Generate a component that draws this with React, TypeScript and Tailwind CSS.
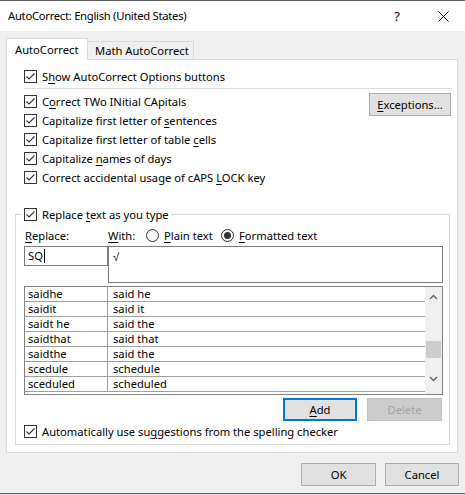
import React from "react";

function Check() {
  return (
    <span className="flex h-[13px] w-[13px] shrink-0 items-center justify-center border border-[#333333] bg-white">
      <svg width="11" height="11" viewBox="0 0 11 11">
        <polyline points="1.5,5.5 4,8 9.5,2.5" fill="none" stroke="#333333" strokeWidth="1.1" />
      </svg>
    </span>
  );
}

function Radio({ on }: { on?: boolean }) {
  return (
    <span className="flex h-[13px] w-[13px] shrink-0 items-center justify-center rounded-full border border-[#333333] bg-white">
      {on && <span className="h-[7px] w-[7px] rounded-full bg-[#333333]" />}
    </span>
  );
}

function CheckRow({ children }: { children: React.ReactNode }) {
  return (
    <div className="flex h-[19px] items-center gap-[5px]">
      <Check />
      <span className="whitespace-nowrap">{children}</span>
    </div>
  );
}

const rows: [string, string][] = [
  ["saidhe", "said he"],
  ["saidit", "said it"],
  ["saidt he", "said the"],
  ["saidthat", "said that"],
  ["saidthe", "said the"],
  ["scedule", "schedule"],
  ["sceduled", "scheduled"],
];

export default function App() {
  return (
    <div className="flex h-[495px] w-[465px] flex-col overflow-hidden bg-[#f0f0f0] font-['Noto_Sans',sans-serif] text-[11.2px] leading-none text-black">
      <div className="h-px bg-[#5b5b5b]" />
      <div className="flex h-[30px] items-center bg-white pl-[8px]">
        <span className="whitespace-nowrap text-[11.3px] tracking-[-0.3px]">AutoCorrect: English (United States)</span>
        <span className="ml-auto mr-[38px] text-[13px]">?</span>
        <svg width="11" height="11" viewBox="0 0 11 11" className="mr-[16px]">
          <path d="M0.5 0.5 L10.5 10.5 M10.5 0.5 L0.5 10.5" stroke="#000" strokeWidth="1" />
        </svg>
      </div>

      <div className="ml-[6px] mt-[7px] flex h-[21px] items-end">
        <div className="relative z-10 -mb-px flex h-[22px] w-[82px] items-center whitespace-nowrap border border-b-0 border-[#d9d9d9] bg-white pl-[8px]">
          AutoCorrect
        </div>
        <div className="flex h-[18px] w-[106px] items-center whitespace-nowrap border-r border-t border-[#d9d9d9] bg-[#f0f0f0] pl-[7px] pt-px">
          Math AutoCorrect
        </div>
      </div>

      <div className="ml-[6px] flex h-[394px] w-[452px] flex-col border border-[#d9d9d9] bg-white">
        <div className="ml-[17px] mt-[7px]">
          <CheckRow>
            S<u className="underline-offset-2">h</u>ow AutoCorrect Options buttons
          </CheckRow>
        </div>
        <div className="ml-[17px] mr-[5px] mt-[2px] h-px bg-[#dcdcdc]" />

        <div className="ml-[17px] mr-[6px] mt-[3px] flex">
          <div className="flex flex-col">
            <CheckRow>
              C<u className="underline-offset-2">o</u>rrect TWo INitial CApitals
            </CheckRow>
            <CheckRow>
              Capitalize first letter of <u className="underline-offset-2">s</u>entences
            </CheckRow>
            <CheckRow>
              Capitalize first letter of table <u className="underline-offset-2">c</u>ells
            </CheckRow>
            <CheckRow>
              Capitalize <u className="underline-offset-2">n</u>ames of days
            </CheckRow>
            <CheckRow>
              Correct accidental usage of cAPS <u className="underline-offset-2">L</u>OCK key
            </CheckRow>
          </div>
          <button className="ml-auto mt-px flex h-[23px] w-[82px] items-center justify-center border border-[#adadad] bg-[#e1e1e1]">
            <span>
              <u className="underline-offset-2">E</u>xceptions...
            </span>
          </button>
        </div>

        <fieldset className="ml-[8px] mt-[18px] w-[435px] border border-[#d9d9d9] pb-[3px] pl-[8px]">
          <legend className="-ml-[2px] flex h-[19px] items-center gap-[5px] px-[2px]">
            <Check />
            <span className="whitespace-nowrap">
              Replace <u className="underline-offset-2">t</u>ext as you type
            </span>
          </legend>

          <div className="mt-[2px] flex h-[19px] items-center whitespace-nowrap">
            <span className="w-[84px] pl-px">
              <u className="underline-offset-2">R</u>eplace:
            </span>
            <span className="w-[38px]">
              <u className="underline-offset-2">W</u>ith:
            </span>
            <span className="flex w-[75px] items-center gap-[5px]">
              <Radio />
              <span>
                <u className="underline-offset-2">P</u>lain text
              </span>
            </span>
            <span className="flex items-center gap-[5px]">
              <Radio on />
              <span>
                <u className="underline-offset-2">F</u>ormatted text
              </span>
            </span>
          </div>

          <div className="mt-px flex items-start">
            <div className="flex h-[20px] w-[84px] items-center border border-[#7a7a7a] pl-[3px]">
              SQ<span className="ml-px inline-block h-[14px] w-px bg-black" />
            </div>
            <div className="h-[37px] w-[335px] border border-[#7a7a7a] pl-[4px] pt-[4px]">√</div>
          </div>

          <div className="mt-[3px] flex h-[109px] w-[419px] border border-[#828282]">
            <div className="flex flex-1 flex-col">
              {rows.map(([a, b]) => (
                <div key={a} className="flex h-[15px] shrink-0 border-b border-[#a0a0a0] leading-[14px]">
                  <div className="w-[83px] border-r border-[#a0a0a0] pl-[3px]">{a}</div>
                  <div className="pl-[5px]">{b}</div>
                </div>
              ))}
            </div>
            <div className="flex w-[17px] flex-col items-center bg-[#f0f0f0]">
              <svg width="9" height="6" viewBox="0 0 9 6" className="mt-[7px]">
                <polyline points="1,5 4.5,1.5 8,5" fill="none" stroke="#606060" strokeWidth="1.4" />
              </svg>
              <div className="mt-[41px] h-[17px] w-[15px] bg-[#cdcdcd]" />
              <svg width="9" height="6" viewBox="0 0 9 6" className="mt-[18px]">
                <polyline points="1,1 4.5,4.5 8,1" fill="none" stroke="#606060" strokeWidth="1.4" />
              </svg>
            </div>
          </div>

          <div className="mt-[3px] flex w-[419px] justify-end gap-[10px]">
            <button className="flex h-[23px] w-[74px] items-center justify-center border-2 border-[#0078d7] bg-[#e1e1e1]">
              <span>
                <u className="underline-offset-2">A</u>dd
              </span>
            </button>
            <button className="mr-px flex h-[23px] w-[75px] items-center justify-center border border-[#bfbfbf] bg-[#cccccc] text-[#a3a3a3]">
              Delete
            </button>
          </div>

          <div className="mt-px">
            <CheckRow>
              Automatically use su<u className="underline-offset-2">g</u>gestions from the spelling checker
            </CheckRow>
          </div>
        </fieldset>
      </div>

      <div className="mr-[6px] mt-[10px] flex justify-end gap-[9px]">
        <button className="flex h-[23px] w-[75px] items-center justify-center border border-[#adadad] bg-[#e1e1e1]">OK</button>
        <button className="flex h-[23px] w-[74px] items-center justify-center border border-[#adadad] bg-[#e1e1e1]">Cancel</button>
      </div>

      <div className="mt-auto h-px bg-[#5b5b5b]" />
      <div className="h-px bg-[#e0e0e0]" />
    </div>
  );
}
